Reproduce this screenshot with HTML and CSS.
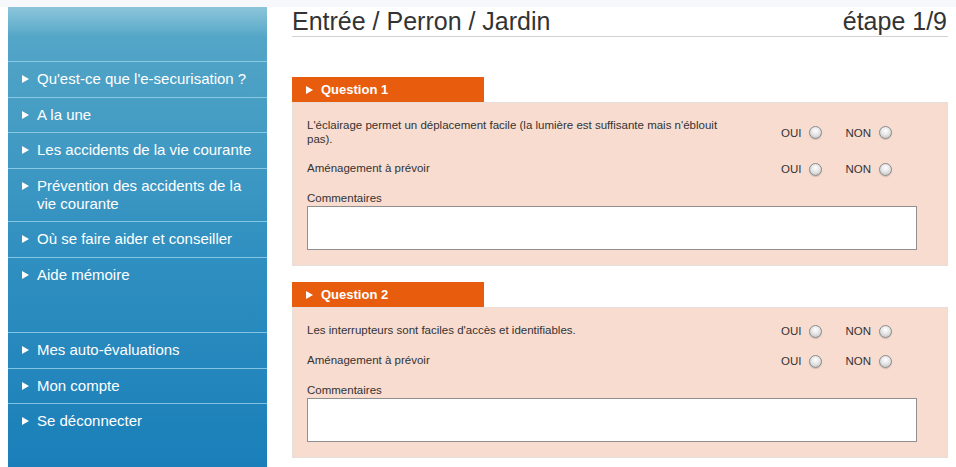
FILE: index.html
```html
<!DOCTYPE html>
<html lang="fr">
<head>
  <meta charset="UTF-8">
  <meta name="viewport" content="width=device-width, initial-scale=1.0">
  <title>Auto-évaluation - Entrée / Perron / Jardin</title>
  <link rel="stylesheet" href="styles.css">
</head>
<body>
  <div class="page">
    <!-- Menu latéral -->
    <aside class="sidebar">
      <div class="sidebar-head"></div>
      <ul class="menu">
        <li><a href="#">Qu'est-ce que l'e-securisation ?</a></li>
        <li><a href="#">A la une</a></li>
        <li><a href="#">Les accidents de la vie courante</a></li>
        <li><a href="#">Prévention des accidents de la vie courante</a></li>
        <li><a href="#">Où se faire aider et conseiller</a></li>
        <li><a href="#">Aide mémoire</a></li>
      </ul>
      <ul class="menu menu-account">
        <li><a href="#">Mes auto-évaluations</a></li>
        <li><a href="#">Mon compte</a></li>
        <li><a href="#">Se déconnecter</a></li>
      </ul>
    </aside>

    <!-- Contenu -->
    <main class="content">
      <div class="title-bar">
        <h1>Entrée / Perron / Jardin</h1>
        <span class="step">étape 1/9</span>
      </div>

      <section class="question">
        <div class="question-tab">Question 1</div>
        <div class="question-body">
          <div class="row">
            <div class="row-label">L'éclairage permet un déplacement facile (la lumière est suffisante mais n'éblouit pas).</div>
            <div class="choices">
              <label>OUI <input type="radio" name="q1"></label>
              <label>NON <input type="radio" name="q1"></label>
            </div>
          </div>
          <div class="row">
            <div class="row-label">Aménagement à prévoir</div>
            <div class="choices">
              <label>OUI <input type="radio" name="q1a"></label>
              <label>NON <input type="radio" name="q1a"></label>
            </div>
          </div>
          <label class="comment-label" for="c1">Commentaires</label>
          <textarea id="c1"></textarea>
        </div>
      </section>

      <section class="question">
        <div class="question-tab">Question 2</div>
        <div class="question-body">
          <div class="row">
            <div class="row-label">Les interrupteurs sont faciles d'accès et identifiables.</div>
            <div class="choices">
              <label>OUI <input type="radio" name="q2"></label>
              <label>NON <input type="radio" name="q2"></label>
            </div>
          </div>
          <div class="row">
            <div class="row-label">Aménagement à prévoir</div>
            <div class="choices">
              <label>OUI <input type="radio" name="q2a"></label>
              <label>NON <input type="radio" name="q2a"></label>
            </div>
          </div>
          <label class="comment-label" for="c2">Commentaires</label>
          <textarea id="c2"></textarea>
        </div>
      </section>
    </main>
  </div>
</body>
</html>
```

FILE: styles.css
```css
/* Base */
body {
  margin: 0;
  font-family: "Liberation Sans", Arial, Helvetica, sans-serif;
  color: #333;
  background: #fff;
}

.page {
  display: flex;
  gap: 25px;
  padding-left: 8px;
  border-top: 7px solid #f7f8fb;
  height: 460px;
  overflow: hidden;
}

/* Menu latéral */
.sidebar {
  width: 259px;
  flex-shrink: 0;
  background: linear-gradient(#5aaac9 0%, #4ca1c5 15%, #2f8fc0 55%, #1a7fb9 100%);
}

.sidebar-head {
  height: 54px;
  background: linear-gradient(#8cc5db, rgba(90, 170, 201, 0) 55%);
}

.menu {
  list-style: none;
  margin: 0;
  padding: 0;
}

.menu li {
  border-top: 1px solid rgba(160, 215, 238, 0.75);
}

.menu a {
  display: flex;
  padding: 8px 12px 8.5px 14px;
  font-size: 15px;
  line-height: 18px;
  color: #fff;
  text-decoration: none;
}

.menu a::before {
  content: "";
  flex-shrink: 0;
  width: 0;
  height: 0;
  margin: 5px 8px 0 0;
  border-top: 4px solid transparent;
  border-bottom: 4px solid transparent;
  border-left: 7px solid #fff;
}

.menu-account {
  margin-top: 40px;
}

/* Contenu */
.content {
  width: 656px;
  flex-shrink: 0;
}

.title-bar {
  display: flex;
  justify-content: space-between;
  border-bottom: 1px solid #d2d2d2;
  font-size: 25px;
  line-height: 29px;
}

.title-bar h1 {
  margin: 0;
  font-size: 25px;
  font-weight: normal;
  line-height: 29px;
}

.step {
  padding-right: 1px;
}

.question {
  margin-top: 40px;
}

.question + .question {
  margin-top: 16px;
}

.question-tab {
  display: flex;
  align-items: center;
  width: 178px;
  height: 25px;
  padding-left: 14px;
  background: #e85c0e;
  color: #fff;
  font-size: 13px;
  font-weight: bold;
}

.question-tab::before {
  content: "";
  width: 0;
  height: 0;
  margin-right: 8px;
  border-top: 4px solid transparent;
  border-bottom: 4px solid transparent;
  border-left: 7px solid #fff;
}

.question-body {
  background: #f8dcd0;
  border: 1px solid #e6dedb;
  padding: 15px 15px 15px 14px;
  font-size: 11.5px;
  line-height: 14px;
}

.row {
  display: grid;
  grid-template-columns: 474px auto;
  margin-bottom: 15px;
}

.row-label {
  width: 420px;
}

.choices {
  display: flex;
  gap: 23px;
  margin-top: 1px;
  font-size: 11.5px;
}

.choices label {
  display: flex;
  align-items: center;
  gap: 8px;
}

.choices input {
  appearance: none;
  -webkit-appearance: none;
  margin: 0;
  width: 13px;
  height: 13px;
  border-radius: 50%;
  border: 1px solid #8a8a8a;
  background: radial-gradient(circle at 50% 35%, #ffffff 0%, #e6e6e6 45%, #b9b9b9 100%);
  box-shadow: 0 1px 1px rgba(0, 0, 0, 0.15);
}

.comment-label {
  display: block;
}

textarea {
  display: block;
  box-sizing: border-box;
  width: 610px;
  height: 44px;
  margin: 1px 0 0;
  border: 1px solid #8f8f8f;
  background: #fff;
  resize: none;
}
```
